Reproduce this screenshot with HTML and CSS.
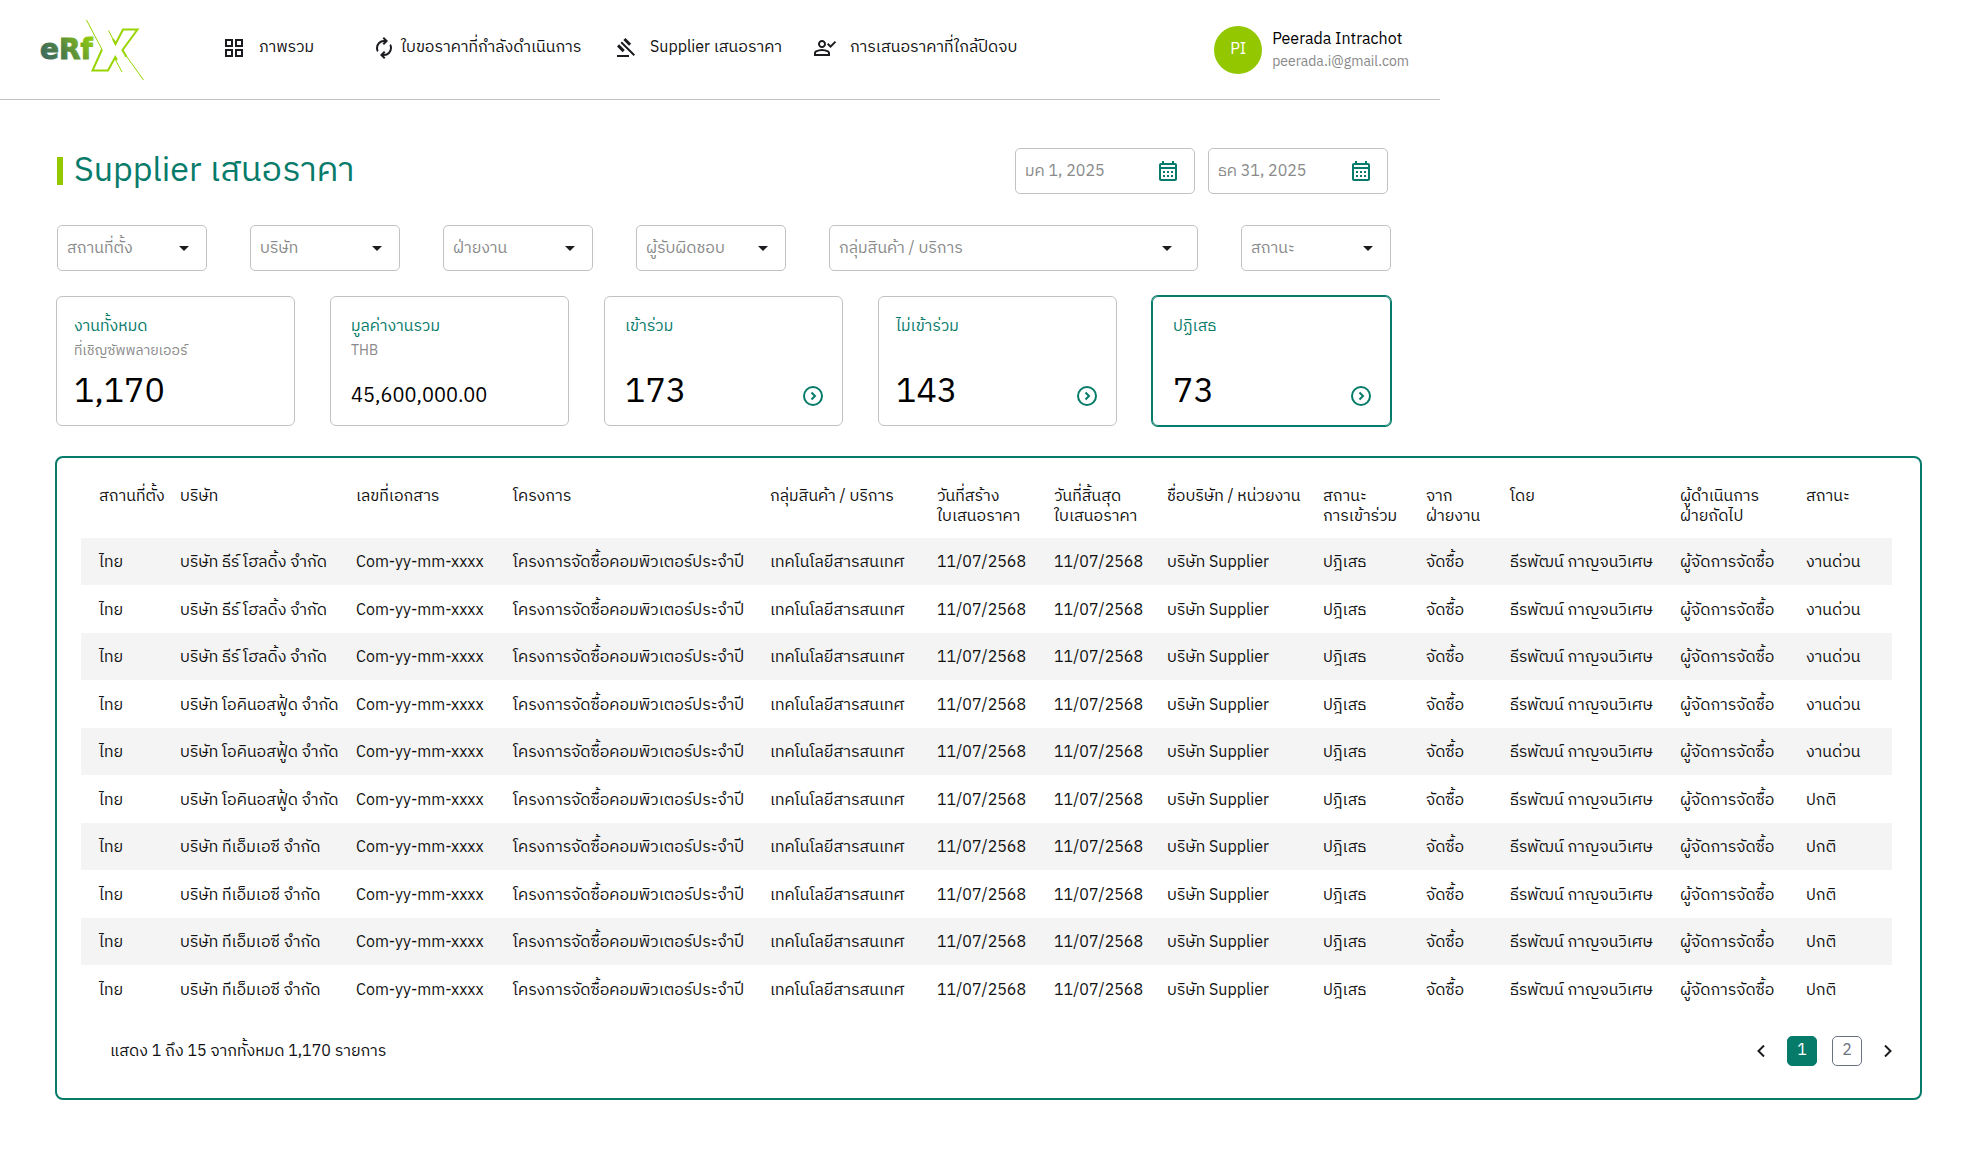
FILE: index.html
```html
<!DOCTYPE html>
<html lang="th">
<head>
<meta charset="utf-8">
<meta name="viewport" content="width=device-width, initial-scale=1">
<title>eRfX – Supplier เสนอราคา</title>
<link rel="stylesheet" href="styles.css">
</head>
<body>
<svg class="sprite" aria-hidden="true">
  <symbol id="i-caret" viewBox="0 0 24 24"><path d="M7 10l5 5 5-5z"/></symbol>
  <symbol id="i-calendar" viewBox="0 0 24 24"><path fill-rule="evenodd" d="M5 22c-1.1 0-2-.9-2-2V6c0-1.1.9-2 2-2h1V2h2v2h8V2h2v2h1c1.1 0 2 .9 2 2v14c0 1.1-.9 2-2 2H5zm0-2h14V10H5v10zM5 8h14V6H5v2zM7 12h2v2H7zM11 12h2v2h-2zM15 12h2v2h-2zM7 16h2v2H7zM11 16h2v2h-2zM15 16h2v2h-2z"/></symbol>
  <symbol id="i-go" viewBox="0 0 20 20"><circle cx="10" cy="10" r="9" fill="none" stroke="currentColor" stroke-width="2"/><path d="M8.5 6.5 12 10l-3.500 3.500" fill="none" stroke="currentColor" stroke-width="2"/></symbol>
</svg>

<header class="topbar">
  <a class="logo" href="#" aria-label="eRfX">
    <svg width="106" height="64" viewBox="0 0 106 64">
      <defs>
        <linearGradient id="brand" x1="0" y1="0.700" x2="1" y2="0.200"><stop offset="0" stop-color="#3d6a60"/><stop offset="0.400" stop-color="#4f8044"/><stop offset="1" stop-color="#93cf0c"/></linearGradient>
      </defs>
      <text class="logo-text" x="0" y="41" fill="url(#brand)" stroke="url(#brand)">eRf</text>
      <g fill="none" stroke="#98d500">
        <path stroke-width="1" d="M46.500 2 62 31.500M68.500 12.500 75.500 26M82 32 103.500 62M75 41l7 13"/>
        <path stroke-width="2" d="M62 31.500 52.500 52.500H68L75.300 39 77 42M73 21l2.500 5L83 11.500h14.500L82.500 32l4 7"/>
      </g>
    </svg>
  </a>
  <nav class="nav" aria-label="เมนูหลัก">
    <a class="nav-item" href="#"><svg class="icon" viewBox="0 -960 960 960"><path d="M120-520v-320h320v320H120Zm0 400v-320h320v320H120Zm400-400v-320h320v320H520Zm0 400v-320h320v320H520ZM200-600h160v-160H200v160Zm400 0h160v-160H600v160Zm0 400h160v-160H600v160Zm-400 0h160v-160H200v160Z"/></svg>ภาพรวม</a>
    <a class="nav-item nav-item--tight" href="#"><svg class="icon" viewBox="0 -960 960 960"><path d="M204-318q-22-38-33-78t-11-82q0-134 93-228t227-94h7l-64-64 56-56 160 160-160 160-56-56 64-64h-7q-100 0-170 70.500T240-478q0 26 6 51t18 49l-60 60ZM481-40 321-200l160-160 56 56-64 64h7q100 0 170-70.500T720-482q0-26-6-51t-18-49l60-60q22 38 33 78t11 82q0 134-93 228t-227 94h-7l64 64-56 56Z"/></svg>ใบขอราคาที่กำลังดำเนินการ</a>
    <a class="nav-item" href="#" aria-current="page"><svg class="icon" viewBox="0 -960 960 960"><path d="M160-120v-80h480v80H160Zm226-194L160-540l84-86 228 226-86 86Zm254-254L414-796l86-84 226 226-86 86Zm184 408L302-682l56-56 522 522-56 56Z"/></svg>Supplier เสนอราคา</a>
    <a class="nav-item" href="#"><svg class="icon" viewBox="0 -960 960 960"><path d="M702-480 560-622l57-56 85 85 170-170 56 57-226 226Zm-342 0q-66 0-113-47t-47-113q0-66 47-113t113-47q66 0 113 47t47 113q0 66-47 113t-113 47ZM40-160v-112q0-34 17.500-62.500T104-378q62-31 126-46.500T360-440q66 0 130 15.500T616-378q29 15 46.500 43.500T680-272v112H40Zm80-80h480v-32q0-11-5.500-20T580-306q-54-27-109-40.500T360-360q-56 0-111 13.500T140-306q-9 5-14.500 14t-5.500 20v32Zm240-320q33 0 56.500-23.500T440-640q0-33-23.500-56.500T360-720q-33 0-56.500 23.500T280-640q0 33 23.500 56.500T360-560Z"/></svg>การเสนอราคาที่ใกล้ปิดจบ</a>
  </nav>
  <div class="user">
    <span class="avatar">PI</span>
    <div class="user-text">
      <div class="user-name">Peerada Intrachot</div>
      <div class="user-mail">peerada.i@gmail.com</div>
    </div>
  </div>
</header>

<main>
  <section class="controls">
    <div class="title-row">
      <h1>Supplier เสนอราคา</h1>
      <div class="dates">
        <label class="field"><input type="text" value="มค 1, 2025" aria-label="วันที่เริ่มต้น"><svg class="icon icon--date"><use href="#i-calendar"/></svg></label>
        <label class="field"><input type="text" value="ธค 31, 2025" aria-label="วันที่สิ้นสุด"><svg class="icon icon--date"><use href="#i-calendar"/></svg></label>
      </div>
    </div>
    <form class="filters">
      <label class="field"><select aria-label="สถานที่ตั้ง"><option>สถานที่ตั้ง</option></select><svg class="icon"><use href="#i-caret"/></svg></label>
      <label class="field"><select aria-label="บริษัท"><option>บริษัท</option></select><svg class="icon"><use href="#i-caret"/></svg></label>
      <label class="field"><select aria-label="ฝ่ายงาน"><option>ฝ่ายงาน</option></select><svg class="icon"><use href="#i-caret"/></svg></label>
      <label class="field"><select aria-label="ผู้รับผิดชอบ"><option>ผู้รับผิดชอบ</option></select><svg class="icon"><use href="#i-caret"/></svg></label>
      <label class="field field--wide"><select aria-label="กลุ่มสินค้า / บริการ"><option>กลุ่มสินค้า / บริการ</option></select><svg class="icon"><use href="#i-caret"/></svg></label>
      <label class="field"><select aria-label="สถานะ"><option>สถานะ</option></select><svg class="icon"><use href="#i-caret"/></svg></label>
    </form>
    <div class="cards">
      <article class="card"><h2>งานทั้งหมด</h2><p>ที่เชิญซัพพลายเออร์</p><strong>1,170</strong></article>
      <article class="card card--inset"><h2>มูลค่างานรวม</h2><p>THB</p><strong class="amount">45,600,000.00</strong></article>
      <article class="card card--inset"><h2>เข้าร่วม</h2><strong>173</strong><button class="go" aria-label="ดูเข้าร่วม"><svg><use href="#i-go"/></svg></button></article>
      <article class="card"><h2>ไม่เข้าร่วม</h2><strong>143</strong><button class="go" aria-label="ดูไม่เข้าร่วม"><svg><use href="#i-go"/></svg></button></article>
      <article class="card card--inset card--active"><h2>ปฏิเสธ</h2><strong>73</strong><button class="go" aria-label="ดูปฏิเสธ"><svg><use href="#i-go"/></svg></button></article>
    </div>
  </section>

  <section class="panel">
    <div class="table-wrap">
    <table>
      <colgroup><col class="c-place"><col class="c-company"><col class="c-doc"><col class="c-project"><col class="c-group"><col class="c-created"><col class="c-ended"><col class="c-supplier"><col class="c-join"><col class="c-dept"><col class="c-by"><col class="c-next"><col class="c-status"></colgroup>
      <thead>
        <tr><th>สถานที่ตั้ง</th><th>บริษัท</th><th>เลขที่เอกสาร</th><th>โครงการ</th><th>กลุ่มสินค้า / บริการ</th><th>วันที่สร้าง<br>ใบเสนอราคา</th><th>วันที่สิ้นสุด<br>ใบเสนอราคา</th><th>ชื่อบริษัท / หน่วยงาน</th><th>สถานะ<br>การเข้าร่วม</th><th>จาก<br>ฝ่ายงาน</th><th>โดย</th><th>ผู้ดำเนินการ<br>ฝ่ายถัดไป</th><th>สถานะ</th></tr>
      </thead>
      <tbody>
        <tr><td>ไทย</td><td>บริษัท ธีร์ โฮลดิ้ง จำกัด</td><td>Com-yy-mm-xxxx</td><td>โครงการจัดซื้อคอมพิวเตอร์ประจำปี</td><td>เทคโนโลยีสารสนเทศ</td><td>11/07/2568</td><td>11/07/2568</td><td>บริษัท Supplier</td><td>ปฎิเสธ</td><td>จัดซื้อ</td><td>ธีรพัฒน์ กาญจนวิเศษ</td><td>ผู้จัดการจัดซื้อ</td><td>งานด่วน</td></tr>
        <tr><td>ไทย</td><td>บริษัท ธีร์ โฮลดิ้ง จำกัด</td><td>Com-yy-mm-xxxx</td><td>โครงการจัดซื้อคอมพิวเตอร์ประจำปี</td><td>เทคโนโลยีสารสนเทศ</td><td>11/07/2568</td><td>11/07/2568</td><td>บริษัท Supplier</td><td>ปฎิเสธ</td><td>จัดซื้อ</td><td>ธีรพัฒน์ กาญจนวิเศษ</td><td>ผู้จัดการจัดซื้อ</td><td>งานด่วน</td></tr>
        <tr><td>ไทย</td><td>บริษัท ธีร์ โฮลดิ้ง จำกัด</td><td>Com-yy-mm-xxxx</td><td>โครงการจัดซื้อคอมพิวเตอร์ประจำปี</td><td>เทคโนโลยีสารสนเทศ</td><td>11/07/2568</td><td>11/07/2568</td><td>บริษัท Supplier</td><td>ปฎิเสธ</td><td>จัดซื้อ</td><td>ธีรพัฒน์ กาญจนวิเศษ</td><td>ผู้จัดการจัดซื้อ</td><td>งานด่วน</td></tr>
        <tr><td>ไทย</td><td>บริษัท โอคินอสฟู้ด จำกัด</td><td>Com-yy-mm-xxxx</td><td>โครงการจัดซื้อคอมพิวเตอร์ประจำปี</td><td>เทคโนโลยีสารสนเทศ</td><td>11/07/2568</td><td>11/07/2568</td><td>บริษัท Supplier</td><td>ปฎิเสธ</td><td>จัดซื้อ</td><td>ธีรพัฒน์ กาญจนวิเศษ</td><td>ผู้จัดการจัดซื้อ</td><td>งานด่วน</td></tr>
        <tr><td>ไทย</td><td>บริษัท โอคินอสฟู้ด จำกัด</td><td>Com-yy-mm-xxxx</td><td>โครงการจัดซื้อคอมพิวเตอร์ประจำปี</td><td>เทคโนโลยีสารสนเทศ</td><td>11/07/2568</td><td>11/07/2568</td><td>บริษัท Supplier</td><td>ปฎิเสธ</td><td>จัดซื้อ</td><td>ธีรพัฒน์ กาญจนวิเศษ</td><td>ผู้จัดการจัดซื้อ</td><td>งานด่วน</td></tr>
        <tr><td>ไทย</td><td>บริษัท โอคินอสฟู้ด จำกัด</td><td>Com-yy-mm-xxxx</td><td>โครงการจัดซื้อคอมพิวเตอร์ประจำปี</td><td>เทคโนโลยีสารสนเทศ</td><td>11/07/2568</td><td>11/07/2568</td><td>บริษัท Supplier</td><td>ปฎิเสธ</td><td>จัดซื้อ</td><td>ธีรพัฒน์ กาญจนวิเศษ</td><td>ผู้จัดการจัดซื้อ</td><td>ปกติ</td></tr>
        <tr><td>ไทย</td><td>บริษัท ทีเอ็มเอซี จำกัด</td><td>Com-yy-mm-xxxx</td><td>โครงการจัดซื้อคอมพิวเตอร์ประจำปี</td><td>เทคโนโลยีสารสนเทศ</td><td>11/07/2568</td><td>11/07/2568</td><td>บริษัท Supplier</td><td>ปฎิเสธ</td><td>จัดซื้อ</td><td>ธีรพัฒน์ กาญจนวิเศษ</td><td>ผู้จัดการจัดซื้อ</td><td>ปกติ</td></tr>
        <tr><td>ไทย</td><td>บริษัท ทีเอ็มเอซี จำกัด</td><td>Com-yy-mm-xxxx</td><td>โครงการจัดซื้อคอมพิวเตอร์ประจำปี</td><td>เทคโนโลยีสารสนเทศ</td><td>11/07/2568</td><td>11/07/2568</td><td>บริษัท Supplier</td><td>ปฎิเสธ</td><td>จัดซื้อ</td><td>ธีรพัฒน์ กาญจนวิเศษ</td><td>ผู้จัดการจัดซื้อ</td><td>ปกติ</td></tr>
        <tr><td>ไทย</td><td>บริษัท ทีเอ็มเอซี จำกัด</td><td>Com-yy-mm-xxxx</td><td>โครงการจัดซื้อคอมพิวเตอร์ประจำปี</td><td>เทคโนโลยีสารสนเทศ</td><td>11/07/2568</td><td>11/07/2568</td><td>บริษัท Supplier</td><td>ปฎิเสธ</td><td>จัดซื้อ</td><td>ธีรพัฒน์ กาญจนวิเศษ</td><td>ผู้จัดการจัดซื้อ</td><td>ปกติ</td></tr>
        <tr><td>ไทย</td><td>บริษัท ทีเอ็มเอซี จำกัด</td><td>Com-yy-mm-xxxx</td><td>โครงการจัดซื้อคอมพิวเตอร์ประจำปี</td><td>เทคโนโลยีสารสนเทศ</td><td>11/07/2568</td><td>11/07/2568</td><td>บริษัท Supplier</td><td>ปฎิเสธ</td><td>จัดซื้อ</td><td>ธีรพัฒน์ กาญจนวิเศษ</td><td>ผู้จัดการจัดซื้อ</td><td>ปกติ</td></tr>
      </tbody>
    </table>
    </div>
    <footer class="panel-foot">
      <p>แสดง 1 ถึง 15 จากทั้งหมด 1,170 รายการ</p>
      <nav class="pager" aria-label="เลขหน้า">
        <button class="arrow" aria-label="หน้าก่อนหน้า"><svg viewBox="0 0 8 12"><path d="M7 0.500 1.500 6 7 11.500"/></svg></button>
        <button class="page page--on" aria-current="page">1</button>
        <button class="page">2</button>
        <button class="arrow" aria-label="หน้าถัดไป"><svg viewBox="0 0 8 12"><path d="M1 0.500 6.500 6 1 11.500"/></svg></button>
      </nav>
    </footer>
  </section>
</main>
</body>
</html>
```
FILE: styles.css
```css
:root {
  --green: #077b6a;
  --lime: #93c800;
  --muted: #8a8a8a;
  --line: #c2c2c2;
}

* { box-sizing: border-box; }

body {
  margin: 0;
  background: #fff;
  color: #111;
  font-family: "IBM Plex Sans Thai", "IBM Plex Sans", "Noto Sans", sans-serif;
  font-size: 16px;
  line-height: 20px;
}

h1, h2, p { margin: 0; font-weight: 400; }
button, input, select { font: inherit; color: inherit; }
button { padding: 0; border: 0; background: none; cursor: pointer; }
a { color: inherit; text-decoration: none; }

.sprite { display: none; }
.icon { width: 24px; height: 24px; flex: none; fill: #1c1b1f; }

/* Top bar */
.topbar {
  display: flex;
  align-items: center;
  max-width: 1440px;
  height: 100px;
  padding: 0 31px 0 40px;
  border-bottom: 1px solid var(--line);
}
.logo { display: block; height: 64px; }
.logo-text { font: 700 28px "DejaVu Sans", sans-serif; stroke-width: 1px; }
.nav {
  display: grid;
  grid-template-columns: 150px 241px 200px auto;
  margin: 0 auto 3px 76px;
  white-space: nowrap;
}
.nav-item { display: flex; align-items: center; gap: 13px; }
.nav-item--tight { gap: 5px; }
.user { display: flex; align-items: center; gap: 10px; }
.avatar {
  display: grid;
  place-items: center;
  width: 48px;
  height: 48px;
  border-radius: 50%;
  background: var(--lime);
  color: #fff;
}
.user-text { padding-top: 2px; line-height: 22px; }
.user-name { color: #000; }
.user-mail { color: var(--muted); font-size: 14px; }

/* Title, dates and filters */
.controls { max-width: 1440px; padding: 48px 49px 0 56px; }
.title-row {
  display: flex;
  align-items: center;
  justify-content: space-between;
  padding: 0 3px 0 1px;
}
h1 {
  display: flex;
  align-items: center;
  gap: 11px;
  color: var(--green);
  font-size: 34px;
  line-height: 46px;
}
h1::before { content: ""; width: 6px; height: 28px; background: var(--lime); }
.dates { display: flex; gap: 13px; }
.field {
  display: grid;
  grid-template-columns: 1fr 24px;
  align-items: center;
  height: 46px;
  padding-right: 10px;
  border: 1px solid var(--line);
  border-radius: 5px;
  color: var(--muted);
}
.field--wide { padding-right: 18px; }
.dates .field { width: 180px; padding-right: 14px; }
.field input, .field select {
  grid-area: 1 / 1 / 2 / 3;
  width: 100%;
  height: 44px;
  padding: 0 24px 0 9px;
  border: 0;
  outline: 0;
  background: none;
  appearance: none;
}
.field select { padding-top: 2px; line-height: 42px; }
.field .icon { grid-area: 1 / 2; pointer-events: none; }
.icon--date { fill: var(--green); }
.filters {
  display: grid;
  grid-template-columns: repeat(4, 150px) 1fr 150px;
  gap: 43px;
  margin: 31px 0 25px;
  padding-left: 1px;
}

/* Summary cards */
.cards { display: grid; grid-template-columns: repeat(5, 1fr); gap: 35px; }
.card {
  position: relative;
  display: flex;
  flex-direction: column;
  height: 130px;
  padding: 20px 17px 10px;
  border: 1px solid var(--line);
  border-radius: 6px;
}
.card--inset { padding-left: 20px; }
.card--active { border-color: var(--green); box-shadow: 0 0 0 1px var(--green); }
.card h2 { color: var(--green); font-size: 16px; line-height: 20px; }
.card p { margin-top: 4px; color: var(--muted); font-size: 14px; }
.card strong {
  margin-top: auto;
  color: #000;
  font-size: 34px;
  font-weight: 400;
  line-height: 46px;
}
.card .amount { font-size: 20px; line-height: 36px; }
.go { position: absolute; right: 19px; bottom: 19px; height: 20px; color: var(--green); }
.go svg { display: block; width: 20px; height: 20px; }

/* Result table */
.panel {
  margin: 30px 45px 0 55px;
  padding: 0 28px 32px 24px;
  border: 2px solid var(--green);
  border-radius: 8px;
}
.table-wrap { overflow-x: auto; }
table {
  width: 100%;
  min-width: 1800px;
  table-layout: fixed;
  border-collapse: collapse;
  white-space: nowrap;
}
th, td { padding: 0 0 0 18px; text-align: left; font-weight: 400; }
th { height: 80px; padding-top: 29px; vertical-align: top; }
td { height: 48px; padding-top: 3px; }
tbody tr:nth-child(odd) { background: #f4f4f4; }
tbody tr:nth-child(odd) td { height: 47px; }
.c-place { width: 81px; }
.c-company { width: 176px; }
.c-doc { width: 157px; }
.c-project { width: 257px; }
.c-group { width: 167px; }
.c-created { width: 117px; }
.c-ended { width: 113px; }
.c-supplier { width: 156px; }
.c-join { width: 103px; }
.c-dept { width: 84px; }
.c-by { width: 170px; }
.c-next { width: 126px; }
.c-status { width: 104px; }

.panel-foot {
  display: flex;
  align-items: center;
  justify-content: space-between;
  margin-top: 23px;
  padding-left: 29px;
}
.panel-foot p { padding-top: 2px; }
.pager { display: flex; align-items: center; gap: 15px; }
.arrow { display: grid; place-items: center; width: 8px; height: 30px; margin-left: 7px; }
.arrow:first-child { margin: 0 7px 0 0; }
.arrow svg { width: 8px; height: 12px; fill: none; stroke: #1c1b1f; stroke-width: 2; }
.page { width: 30px; height: 30px; border: 1px solid #6b7280; border-radius: 5px; color: #6b7280; }
.page--on { border-color: var(--green); background: var(--green); color: #fff; }
```
